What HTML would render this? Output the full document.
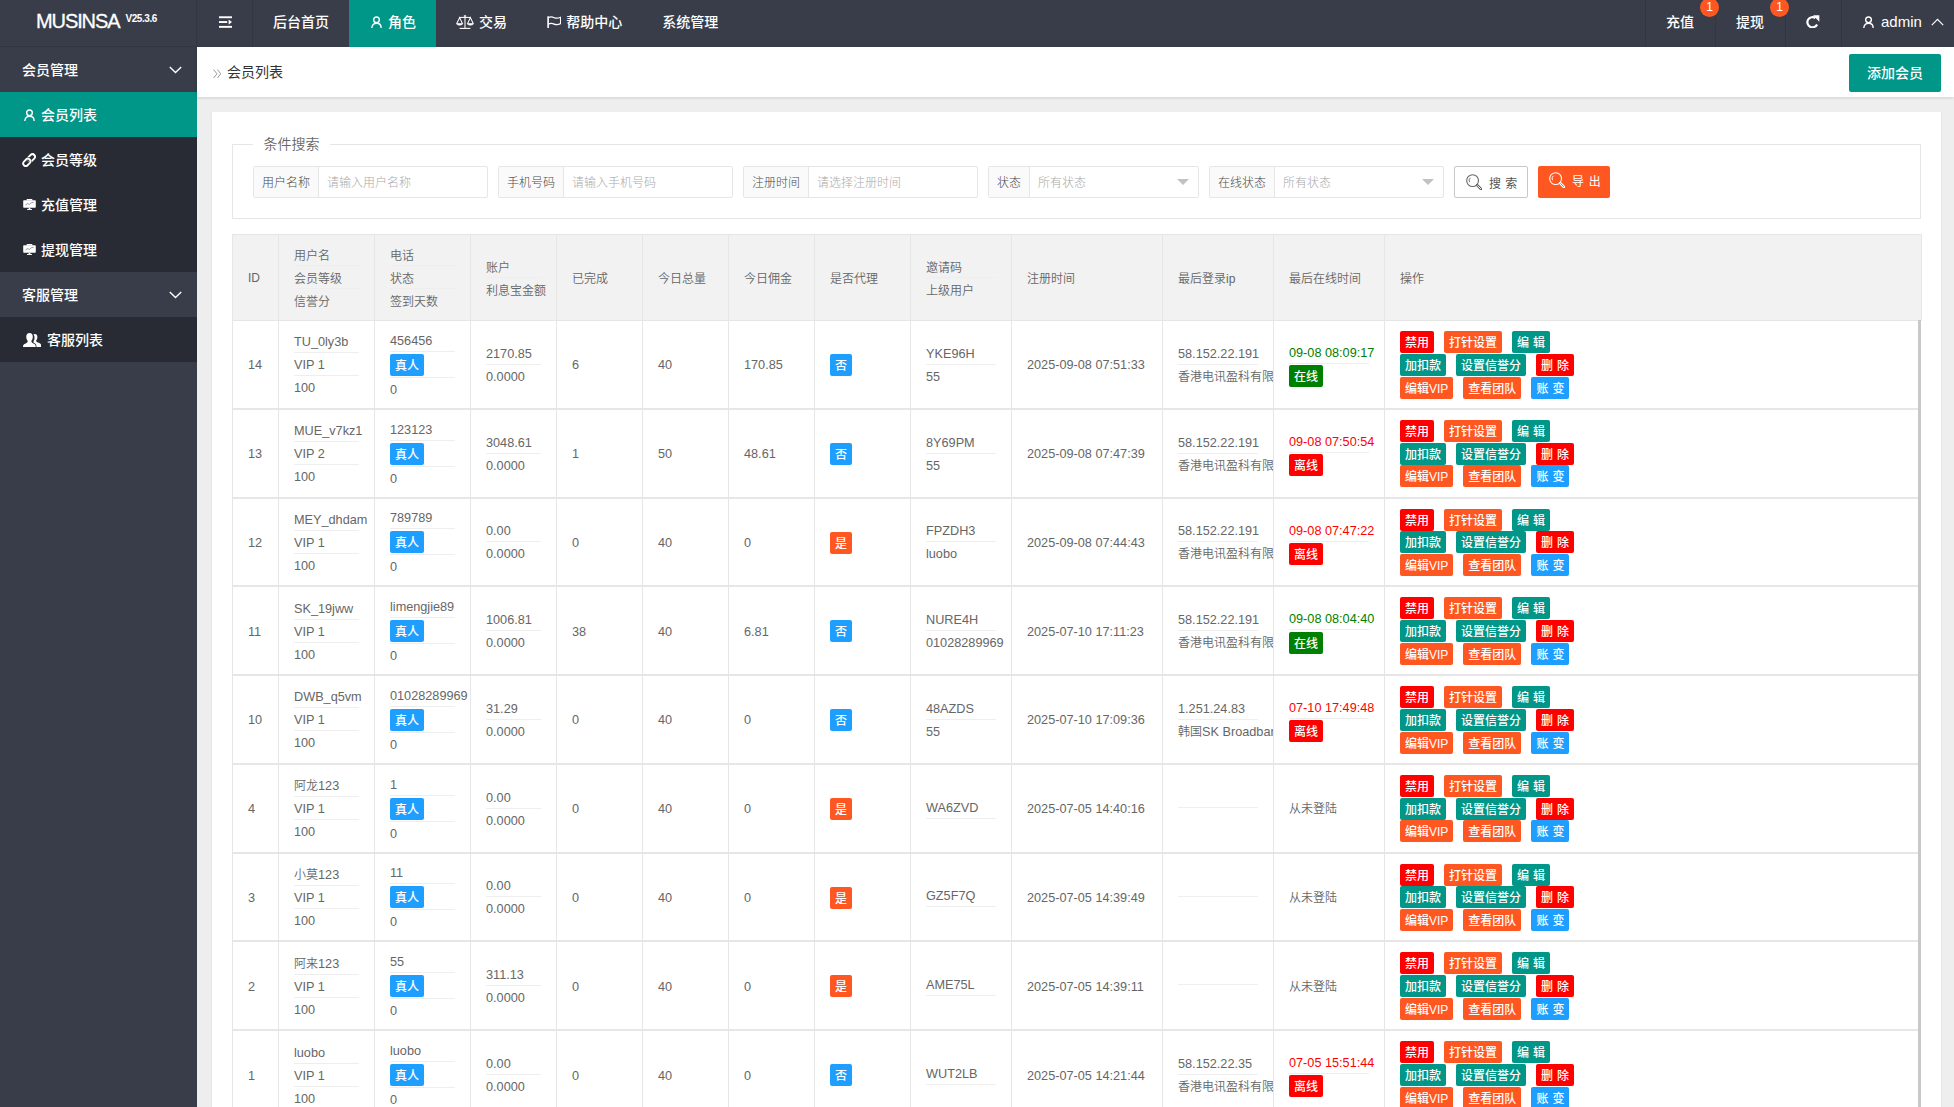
<!DOCTYPE html>
<html lang="zh-CN">
<head>
<meta charset="utf-8">
<title>会员列表</title>
<style>
*{box-sizing:border-box}
html,body{margin:0;padding:0}
html{width:1954px;height:1107px;overflow:hidden}
body{width:1954px;height:1107px;overflow:hidden;background:#eee;position:relative;
 font-family:"Liberation Sans","Noto Sans CJK SC",sans-serif;font-size:14px;color:#333;-webkit-font-smoothing:antialiased}
a{text-decoration:none;color:inherit}
svg{display:block}
.abs{position:absolute}
/* header */
#hd{position:absolute;left:0;top:0;width:1954px;height:47px;background:#393d49;color:#fff}
#logo{position:absolute;left:0;top:0;width:197px;height:47px;border-right:1px solid #33363f;border-bottom:1px solid #33363f}
#logo .n{position:absolute;left:36px;top:9px;font-size:20px;line-height:24px;letter-spacing:-1.1px;-webkit-text-stroke:.3px #fff;white-space:nowrap}
#logo .v{position:absolute;left:125.5px;top:10.5px;font-size:10px;line-height:16px;font-weight:bold;letter-spacing:-.45px;white-space:nowrap}
.ht{position:absolute;top:0;height:47px;line-height:44px;font-size:14px;font-weight:500;white-space:nowrap;color:#fff}
.ht.act{background:#009688}
.vl{position:absolute;top:0;width:1px;height:47px;background:#33363f}
.dot{position:absolute;top:-2px;width:19px;height:19px;border-radius:50%;background:#ff5722;color:#fff;font-size:12px;line-height:19px;text-align:center}
/* side */
#sd{position:absolute;left:0;top:47px;width:197px;height:1060px;background:#393d49;color:#fff}
.si{position:absolute;left:0;width:197px;height:45px;line-height:46px;font-size:14px;font-weight:500;white-space:nowrap}
.si.ch{background:#282b33}
.si.act{background:#009688}
.si .t{position:absolute;top:0}
/* crumb */
#cr{position:absolute;left:197px;top:47px;width:1757px;height:50px;background:#fff;box-shadow:0 1px 3px rgba(0,0,0,.12)}
#cr .t{position:absolute;left:30px;top:0;line-height:51px;font-size:14px;color:#333}
#add{font-weight:500;position:absolute;left:1849px;top:54px;width:92px;height:38px;border-radius:2px;background:#009688;color:#fff;font-size:14px;line-height:39px;text-align:center}
/* panel */
#pn{position:absolute;left:212px;top:112px;width:1729px;height:995px;background:#fff;box-shadow:0 1px 2px rgba(0,0,0,.08)}
#fs{position:absolute;left:232px;top:144px;width:1689px;height:75px;border:1px solid #e6e6e6}
#lg{font-weight:350;position:absolute;left:253px;top:134px;width:77px;height:22px;background:#fff;line-height:21px;text-align:center;font-size:14px;color:#666}
.g{position:absolute;top:166px;height:32px;border:1px solid #e6e6e6;border-radius:2px;background:#fff;font-size:12px}
.g .lb{position:absolute;left:0;top:0;height:30px;line-height:32px;font-weight:300;overflow:hidden;padding:0 8px;background:#fafafa;border-right:1px solid #e6e6e6;color:#4a4a4a;white-space:nowrap}
.g .ph{position:absolute;top:0;height:30px;line-height:33px;font-weight:300;overflow:hidden;color:#aaa;white-space:nowrap}
.g .tri{position:absolute;top:12px;width:0;height:0;border:6px solid transparent;border-top-color:#c2c2c2;border-bottom-width:0}
.btn{position:absolute;top:166px;height:32px;border-radius:2px;font-size:12px;line-height:31px;white-space:nowrap;overflow:hidden}
/* table */
#th{font-weight:350;position:absolute;left:232px;top:234px;width:1690px;height:87px;background:#f2f2f2;border:1px solid #e6e6e6;font-size:12px;color:#666}
#th .td{border-right:1px solid #e6e6e6}
#th .td:last-child{border-right:0}
#tb{font-weight:350;position:absolute;left:232px;top:321px;width:1686px;height:786px;border-left:1px solid #e6e6e6;overflow:hidden;font-size:12px;color:#666;background:#fff}
#sb{position:absolute;left:1918px;top:320px;width:3px;height:787px;background:#c8c8c8}
.tr{position:absolute;left:0;width:1685px;border-bottom:2px solid #e6e6e6}
.td{position:absolute;top:0;bottom:0;padding:0 15px;border-right:1px solid #e6e6e6;display:flex;align-items:center;overflow:hidden;white-space:nowrap}
.td:last-child{border-right:0}
.ci{line-height:23px}
.l{font-size:12.7px}
.stk{display:block}
.it{height:23px;line-height:24px;border-bottom:1px solid #eee;overflow:visible}
.it.last{border-bottom:0;line-height:25px}
.it.bd{height:26px;padding-top:2.5px;line-height:22px}
.it.b2{height:24px;padding-top:1px;line-height:22px}
.ci>.bdg{margin-top:1px}
.ci.s{padding-top:2px}
#th .it{line-height:26px}
#th .it.last{line-height:27px}
#th .ci.s{padding-top:3px}
.it.e{height:1px}
.it.last.e{height:0}
.bdg{font-weight:500;display:inline-block;height:22px;line-height:25px;overflow:hidden;padding:0 5px;border-radius:2px;color:#fff;font-size:12px;vertical-align:top}
.blue{background:#1e9fff}.orange{background:#ff5722}.teal{background:#009688}.bred{background:#ff0000}.bgreen{background:#008000}
.ops{display:block}
.ol{height:23px;padding-top:1px;display:flex}
.b{font-weight:500;display:block;height:22px;line-height:25px;overflow:hidden;word-spacing:.7px;padding:0 5px;margin-right:10px;border-radius:2px;color:#fff;font-size:12px;white-space:pre}
.b .l{font-size:12px}
</style>
</head>
<body>
<div id="hd"><div id="logo"><span class="n">MUSINSA</span><span class="v">V25.3.6</span></div><svg class="abs" style="left:218.9px;top:15.8px" width="13" height="12" viewBox="0 0 13 12"><rect x="0" y="0.3" width="13" height="1.9" fill="#fff"/><rect x="0" y="5.1" width="8.2" height="1.9" fill="#fff"/><rect x="0" y="9.9" width="13" height="1.9" fill="#fff"/><path d="M9.6 3.4 L13 6.05 L9.6 8.7 Z" fill="#fff"/></svg><div class="vl" style="left:252px"></div><div class="ht" style="left:273px">后台首页</div><div class="ht act" style="left:349px;width:87px"></div><svg class="abs" style="left:370.6px;top:15.6px" width="11" height="12.4" viewBox="0 0 12 13"><circle cx="6" cy="3.9" r="3.1" fill="none" stroke="#fff" stroke-width="1.5"/><path d="M0.9 13 C0.9 9.4 3.2 7.6 6 7.6 C8.8 7.6 11.1 9.4 11.1 13" fill="none" stroke="#fff" stroke-width="1.5"/></svg><div class="ht" style="left:388px">角色</div><svg class="abs" style="left:455.5px;top:15.1px" width="18" height="14" viewBox="0 0 18 14"><g fill="none" stroke="#fff" stroke-width="1.05"><path d="M9 1.8 V13"/><path d="M3.6 13.4 H14.4" stroke-width="1.1"/><path d="M3.2 2.4 H14.8"/><path d="M0.8 8.5 L3.6 2.6 L6.4 8.5"/><path d="M11.6 8.5 L14.4 2.6 L17.2 8.5"/><path d="M0.4 8.5 H6.8 C6.5 10.7 0.7 10.7 0.4 8.5 Z" fill="#fff" stroke-width="0.6"/><path d="M11.2 8.5 H17.6 C17.3 10.7 11.5 10.7 11.2 8.5 Z" fill="#fff" stroke-width="0.6"/><circle cx="9" cy="1" r="0.85" stroke-width="0.9"/></g></svg><div class="ht" style="left:479px">交易</div><svg class="abs" style="left:546.9px;top:15.8px" width="14.5" height="12.4" viewBox="0 0 14.5 12.4"><g fill="none" stroke="#fff"><path d="M1.1 0.2 V12" stroke-width="1.6"/><path d="M1.4 1.7 C3.6 0.5 5.4 0.9 7.2 1.7 C9.2 2.6 11 2.4 13.6 1.2 V7.6 C11 8.8 9.2 9 7.2 8.1 C5.4 7.3 3.6 6.9 1.4 8.1" stroke-width="1.25" stroke-linejoin="round"/></g></svg><div class="ht" style="left:566.3px">帮助中心</div><div class="ht" style="left:662.2px">系统管理</div><div class="vl" style="left:1645px"></div><div class="vl" style="left:1715px"></div><div class="vl" style="left:1785px"></div><div class="vl" style="left:1841px"></div><div class="ht" style="left:1666px">充值</div><div class="dot" style="left:1700px">1</div><div class="ht" style="left:1736px">提现</div><div class="dot" style="left:1770px">1</div><svg class="abs" style="left:1806.2px;top:15.3px" width="13.5" height="13" viewBox="0 0 13.5 13"><path d="M11.1 9.4 A5.1 5.1 0 1 1 9.4 3.0" fill="none" stroke="#fff" stroke-width="2.2"/><path d="M7.0 0.2 L13.3 0.2 L13.3 6.7 Z" fill="#fff"/></svg><svg class="abs" style="left:1863.2px;top:15.6px" width="11" height="12.4" viewBox="0 0 12 13"><circle cx="6" cy="3.9" r="3.1" fill="none" stroke="#fff" stroke-width="1.5"/><path d="M0.9 13 C0.9 9.4 3.2 7.6 6 7.6 C8.8 7.6 11.1 9.4 11.1 13" fill="none" stroke="#fff" stroke-width="1.5"/></svg><div class="ht" style="left:1881px;font-size:15px">admin</div><svg class="abs" style="left:1930.8px;top:18px" width="13" height="8" viewBox="0 0 13 8"><path d="M0.8 7.1 L6.5 1.4 L12.2 7.1" fill="none" stroke="#fff" stroke-width="1.2"/></svg></div>
<div id="sd"><div class="si" style="top:0"><span class="t" style="left:22px">会员管理</span></div><svg class="abs" style="left:168.6px;top:19.2px" width="13" height="8" viewBox="0 0 13 8"><path d="M0.8 0.9 L6.5 6.6 L12.2 0.9" fill="none" stroke="#fff" stroke-width="1.4"/></svg><div class="si ch act" style="top:45px"><span class="t" style="left:41px">会员列表</span></div><svg class="abs" style="left:23.6px;top:61.6px" width="11" height="12.4" viewBox="0 0 12 13"><circle cx="6" cy="3.9" r="3.1" fill="none" stroke="#fff" stroke-width="1.5"/><path d="M0.9 13 C0.9 9.4 3.2 7.6 6 7.6 C8.8 7.6 11.1 9.4 11.1 13" fill="none" stroke="#fff" stroke-width="1.5"/></svg><div class="si ch" style="top:90px"><span class="t" style="left:41px">会员等级</span></div><svg class="abs" style="left:22.1px;top:105.5px" width="14.2" height="14.2" viewBox="0 0 14.4 14.4"><g fill="none" stroke-linecap="round"><rect x="-4.1" y="-2.6" width="8.2" height="5.2" rx="2.6" transform="translate(9.5 4.9) rotate(-45)" stroke="#fff" stroke-width="1.9"/><path d="M-4.1 0 V0 A2.6 2.6 0 0 1 -1.5 -2.6 H1.5 A2.6 2.6 0 0 1 4.1 0 A2.6 2.6 0 0 1 1.5 2.6 H-1.5 A2.6 2.6 0 0 1 -4.1 0" transform="translate(4.9 9.5) rotate(-45)" stroke="#282b33" stroke-width="3.6"/><rect x="-4.1" y="-2.6" width="8.2" height="5.2" rx="2.6" transform="translate(4.9 9.5) rotate(-45)" stroke="#fff" stroke-width="1.9"/><path d="M-1.2 2.6 H1.5 A2.6 2.6 0 0 0 4.1 0" transform="translate(9.5 4.9) rotate(-45)" stroke="#282b33" stroke-width="3.4" stroke-linecap="butt"/><path d="M-1.8 2.6 H1.5 A2.6 2.6 0 0 0 4.1 0 A2.6 2.6 0 0 0 3.6 -1.5" transform="translate(9.5 4.9) rotate(-45)" stroke="#fff" stroke-width="1.9" stroke-linecap="butt"/></g></svg><div class="si ch" style="top:135px"><span class="t" style="left:41px">充值管理</span></div><svg class="abs" style="left:22.8px;top:152px" width="13" height="11.4" viewBox="0 0 13 11.4"><rect x="0.2" y="1.2" width="12.6" height="7.6" rx="0.8" fill="#fff"/><rect x="3.6" y="0" width="5.8" height="1.6" rx="0.6" fill="#fff"/><path d="M2.4 6 L4.6 4.6 L6.4 5.4 L8.2 3.8 L10.6 3.2" fill="none" stroke="#555a66" stroke-width="0.6"/><rect x="5.6" y="8.8" width="1.8" height="1.6" fill="#fff"/><rect x="4" y="10.1" width="5" height="1.1" fill="#fff"/></svg><div class="si ch" style="top:180px"><span class="t" style="left:41px">提现管理</span></div><svg class="abs" style="left:22.8px;top:197px" width="13" height="11.4" viewBox="0 0 13 11.4"><rect x="0.2" y="1.2" width="12.6" height="7.6" rx="0.8" fill="#fff"/><rect x="3.6" y="0" width="5.8" height="1.6" rx="0.6" fill="#fff"/><path d="M2.4 6 L4.6 4.6 L6.4 5.4 L8.2 3.8 L10.6 3.2" fill="none" stroke="#555a66" stroke-width="0.6"/><rect x="5.6" y="8.8" width="1.8" height="1.6" fill="#fff"/><rect x="4" y="10.1" width="5" height="1.1" fill="#fff"/></svg><div class="si" style="top:225px"><span class="t" style="left:22px">客服管理</span></div><svg class="abs" style="left:168.6px;top:244.2px" width="13" height="8" viewBox="0 0 13 8"><path d="M0.8 0.9 L6.5 6.6 L12.2 0.9" fill="none" stroke="#fff" stroke-width="1.4"/></svg><div class="si ch" style="top:270px"><span class="t" style="left:47px">客服列表</span></div><svg class="abs" style="left:22.8px;top:286px" width="18.4" height="14" viewBox="0 0 18 13.7"><g fill="#fff"><path d="M11.6 1 C13.2 1 14.2 2.3 14.1 4.1 C14 5.6 13.4 6.6 12.9 7.2 C12.8 8.3 13.4 8.9 14.6 9.4 C16.4 10.1 18 10.6 18 12.6 V13.6 H13.2 C13.2 11.6 12.6 10.4 10.6 9.6 C10.2 9.4 10.3 8.6 10.4 8.1 C10.9 7.3 11.2 6.3 11.3 5.2 C11.4 3.6 10.9 2.2 10.2 1.5 C10.6 1.2 11.1 1 11.6 1 Z"/><path d="M6.4 0 C8.4 0 9.7 1.6 9.6 3.9 C9.5 5.8 8.8 7 8.2 7.7 C8.1 9 8.8 9.7 10.2 10.3 C12 11 12.4 11.6 12.4 13.6 H0 C0 11.6 0.8 11 2.6 10.3 C4 9.7 4.7 9 4.6 7.7 C4 7 3.3 5.8 3.2 3.9 C3.1 1.6 4.4 0 6.4 0 Z"/></g></svg></div>
<div id="cr"><svg class="abs" style="left:15.6px;top:21.6px" width="8.6" height="9.6" viewBox="0 0 8.6 9.6"><g fill="none" stroke="#999" stroke-width="1"><path d="M0.6 0.6 L4 4.8 L0.6 9"/><path d="M4.4 0.6 L7.8 4.8 L4.4 9"/></g></svg><span class="t">会员列表</span></div><a id="add">添加会员</a>
<div id="pn"></div>
<div id="fs"></div><div id="lg">条件搜索</div><div class="g" style="left:253px;width:235px"><span class="lb" style="width:65px">用户名称</span><span class="ph" style="left:73px">请输入用户名称</span></div><div class="g" style="left:498px;width:235px"><span class="lb" style="width:65px">手机号码</span><span class="ph" style="left:73px">请输入手机号码</span></div><div class="g" style="left:743px;width:235px"><span class="lb" style="width:65px">注册时间</span><span class="ph" style="left:73px">请选择注册时间</span></div><div class="g" style="left:988px;width:211px"><span class="lb" style="width:41px">状态</span><span class="ph" style="left:49px">所有状态</span><i class="tri" style="left:188px"></i></div><div class="g" style="left:1209px;width:235px"><span class="lb" style="width:65px">在线状态</span><span class="ph" style="left:73px">所有状态</span><i class="tri" style="left:212px"></i></div><a class="btn" style="left:1454px;width:74px;border:1px solid #c9c9c9;background:#fff;color:#555"><svg class="abs" style="left:10.6px;top:7px" width="16.4" height="16.4" viewBox="0 0 16.4 16.4"><g fill="none" stroke="#666"><circle cx="6.6" cy="6.6" r="5.9" stroke-width="1.1"/><path d="M3.6 8.2 A3.4 3.4 0 0 1 4.4 3.8" stroke-width="0.9"/><path d="M11.2 11.2 L15 15" stroke-width="2.6" stroke-linecap="round"/></g><path d="M11.6 11.6 L14.7 14.7" stroke="#fff" stroke-width="0.9" stroke-linecap="round"/></svg><span class="abs" style="left:34px;top:2px;word-spacing:1px">搜 索</span></a><a class="btn" style="left:1538px;width:72px;background:#ff5722;color:#fff"><svg class="abs" style="left:10.8px;top:6px" width="16.4" height="16.4" viewBox="0 0 16.4 16.4"><g fill="none" stroke="#fff"><circle cx="6.6" cy="6.6" r="5.9" stroke-width="1.1"/><path d="M3.6 8.2 A3.4 3.4 0 0 1 4.4 3.8" stroke-width="0.9"/><path d="M11.2 11.2 L15 15" stroke-width="2.6" stroke-linecap="round"/></g><path d="M11.6 11.6 L14.7 14.7" stroke="#ff5722" stroke-width="0.9" stroke-linecap="round"/></svg><span class="abs" style="left:34px;top:1px;word-spacing:1.5px">导 出</span></a>
<div id="th"><div class="td" style="left:0px;width:46px"><div class="ci s"><span style="position:relative;top:-1px">ID</span></div></div><div class="td" style="left:46px;width:96px"><div class="ci"><div class="stk" style="width:65px"><div class="it">用户名</div><div class="it">会员等级</div><div class="it last">信誉分</div></div></div></div><div class="td" style="left:142px;width:96px"><div class="ci"><div class="stk" style="width:65px"><div class="it">电话</div><div class="it">状态</div><div class="it last">签到天数</div></div></div></div><div class="td" style="left:238px;width:86px"><div class="ci"><div class="stk" style="width:55px"><div class="it">账户</div><div class="it last">利息宝金额</div></div></div></div><div class="td" style="left:324px;width:86px"><div class="ci s">已完成</div></div><div class="td" style="left:410px;width:86px"><div class="ci s">今日总量</div></div><div class="td" style="left:496px;width:86px"><div class="ci s">今日佣金</div></div><div class="td" style="left:582px;width:96px"><div class="ci s">是否代理</div></div><div class="td" style="left:678px;width:101px"><div class="ci"><div class="stk" style="width:70px"><div class="it">邀请码</div><div class="it last">上级用户</div></div></div></div><div class="td" style="left:779px;width:151px"><div class="ci s">注册时间</div></div><div class="td" style="left:930px;width:111px"><div class="ci s">最后登录ip</div></div><div class="td" style="left:1041px;width:111px"><div class="ci s">最后在线时间</div></div><div class="td" style="left:1152px;width:536px"><div class="ci s">操作</div></div></div>
<div id="tb">
<div class="tr" style="top:0px;height:89px"><div class="td" style="left:0px;width:46px;"><div class="ci s"><span class="l">14</span></div></div><div class="td" style="left:46px;width:96px;"><div class="ci"><div class="stk" style="width:65px"><div class="it"><span class="l">TU_0ly3b</span></div><div class="it"><span class="l">VIP 1</span></div><div class="it last"><span class="l">100</span></div></div></div></div><div class="td" style="left:142px;width:96px;"><div class="ci"><div class="stk" style="width:65px"><div class="it"><span class="l">456456</span></div><div class="it bd"><span class="bdg blue">真人</span></div><div class="it last"><span class="l">0</span></div></div></div></div><div class="td" style="left:238px;width:86px;"><div class="ci"><div class="stk" style="width:55px"><div class="it"><span class="l">2170.85</span></div><div class="it last"><span class="l">0.0000</span></div></div></div></div><div class="td" style="left:324px;width:86px;"><div class="ci s"><span class="l">6</span></div></div><div class="td" style="left:410px;width:86px;"><div class="ci s"><span class="l">40</span></div></div><div class="td" style="left:496px;width:86px;"><div class="ci s"><span class="l">170.85</span></div></div><div class="td" style="left:582px;width:96px;"><div class="ci"><span class="bdg blue">否</span></div></div><div class="td" style="left:678px;width:101px;"><div class="ci"><div class="stk" style="width:70px"><div class="it"><span class="l">YKE96H</span></div><div class="it last"><span class="l">55</span></div></div></div></div><div class="td" style="left:779px;width:151px;"><div class="ci s"><span class="l">2025-09-08 07:51:33</span></div></div><div class="td" style="left:930px;width:111px;"><div class="ci"><div class="stk" style="width:80px"><div class="it"><span class="l">58.152.22.191</span></div><div class="it last">香港电讯盈科有限公司</div></div></div></div><div class="td" style="left:1041px;width:111px;"><div class="ci"><div class="stk" style="width:80px"><div class="it" style="color:green"><span class="l">09-08 08:09:17</span></div><div class="it b2 last"><span class="bdg bgreen">在线</span></div></div></div></div><div class="td" style="left:1152px;width:537px;"><div class="ci"><div class="ops"><div class="ol"><a class="b bred">禁用</a><a class="b orange">打针设置</a><a class="b teal">编 辑</a></div><div class="ol"><a class="b teal">加扣款</a><a class="b teal">设置信誉分</a><a class="b bred">删 除</a></div><div class="ol"><a class="b orange">编辑<span class="l">VIP</span></a><a class="b orange">查看团队</a><a class="b blue">账 变</a></div></div></div></div></div>
<div class="tr" style="top:89px;height:89px"><div class="td" style="left:0px;width:46px;"><div class="ci s"><span class="l">13</span></div></div><div class="td" style="left:46px;width:96px;"><div class="ci"><div class="stk" style="width:65px"><div class="it"><span class="l">MUE_v7kz1</span></div><div class="it"><span class="l">VIP 2</span></div><div class="it last"><span class="l">100</span></div></div></div></div><div class="td" style="left:142px;width:96px;"><div class="ci"><div class="stk" style="width:65px"><div class="it"><span class="l">123123</span></div><div class="it bd"><span class="bdg blue">真人</span></div><div class="it last"><span class="l">0</span></div></div></div></div><div class="td" style="left:238px;width:86px;"><div class="ci"><div class="stk" style="width:55px"><div class="it"><span class="l">3048.61</span></div><div class="it last"><span class="l">0.0000</span></div></div></div></div><div class="td" style="left:324px;width:86px;"><div class="ci s"><span class="l">1</span></div></div><div class="td" style="left:410px;width:86px;"><div class="ci s"><span class="l">50</span></div></div><div class="td" style="left:496px;width:86px;"><div class="ci s"><span class="l">48.61</span></div></div><div class="td" style="left:582px;width:96px;"><div class="ci"><span class="bdg blue">否</span></div></div><div class="td" style="left:678px;width:101px;"><div class="ci"><div class="stk" style="width:70px"><div class="it"><span class="l">8Y69PM</span></div><div class="it last"><span class="l">55</span></div></div></div></div><div class="td" style="left:779px;width:151px;"><div class="ci s"><span class="l">2025-09-08 07:47:39</span></div></div><div class="td" style="left:930px;width:111px;"><div class="ci"><div class="stk" style="width:80px"><div class="it"><span class="l">58.152.22.191</span></div><div class="it last">香港电讯盈科有限公司</div></div></div></div><div class="td" style="left:1041px;width:111px;"><div class="ci"><div class="stk" style="width:80px"><div class="it" style="color:red"><span class="l">09-08 07:50:54</span></div><div class="it b2 last"><span class="bdg bred">离线</span></div></div></div></div><div class="td" style="left:1152px;width:537px;"><div class="ci"><div class="ops"><div class="ol"><a class="b bred">禁用</a><a class="b orange">打针设置</a><a class="b teal">编 辑</a></div><div class="ol" style="height:22px"><a class="b teal">加扣款</a><a class="b teal">设置信誉分</a><a class="b bred">删 除</a></div><div class="ol" style="height:24px"><a class="b orange">编辑<span class="l">VIP</span></a><a class="b orange">查看团队</a><a class="b blue">账 变</a></div></div></div></div></div>
<div class="tr" style="top:178px;height:88px"><div class="td" style="left:0px;width:46px;"><div class="ci s"><span class="l">12</span></div></div><div class="td" style="left:46px;width:96px;"><div class="ci"><div class="stk" style="width:65px"><div class="it"><span class="l">MEY_dhdam</span></div><div class="it"><span class="l">VIP 1</span></div><div class="it last"><span class="l">100</span></div></div></div></div><div class="td" style="left:142px;width:96px;"><div class="ci"><div class="stk" style="width:65px"><div class="it"><span class="l">789789</span></div><div class="it bd" style="padding-top:1.5px"><span class="bdg blue">真人</span></div><div class="it last"><span class="l">0</span></div></div></div></div><div class="td" style="left:238px;width:86px;"><div class="ci"><div class="stk" style="width:55px"><div class="it"><span class="l">0.00</span></div><div class="it last"><span class="l">0.0000</span></div></div></div></div><div class="td" style="left:324px;width:86px;"><div class="ci s"><span class="l">0</span></div></div><div class="td" style="left:410px;width:86px;"><div class="ci s"><span class="l">40</span></div></div><div class="td" style="left:496px;width:86px;"><div class="ci s"><span class="l">0</span></div></div><div class="td" style="left:582px;width:96px;"><div class="ci"><span class="bdg orange">是</span></div></div><div class="td" style="left:678px;width:101px;"><div class="ci"><div class="stk" style="width:70px"><div class="it"><span class="l">FPZDH3</span></div><div class="it last"><span class="l">luobo</span></div></div></div></div><div class="td" style="left:779px;width:151px;"><div class="ci s"><span class="l">2025-09-08 07:44:43</span></div></div><div class="td" style="left:930px;width:111px;"><div class="ci"><div class="stk" style="width:80px"><div class="it"><span class="l">58.152.22.191</span></div><div class="it last">香港电讯盈科有限公司</div></div></div></div><div class="td" style="left:1041px;width:111px;"><div class="ci"><div class="stk" style="width:80px"><div class="it" style="color:red"><span class="l">09-08 07:47:22</span></div><div class="it b2 last"><span class="bdg bred">离线</span></div></div></div></div><div class="td" style="left:1152px;width:537px;"><div class="ci"><div class="ops"><div class="ol" style="height:22px"><a class="b bred">禁用</a><a class="b orange">打针设置</a><a class="b teal">编 辑</a></div><div class="ol"><a class="b teal">加扣款</a><a class="b teal">设置信誉分</a><a class="b bred">删 除</a></div><div class="ol"><a class="b orange">编辑<span class="l">VIP</span></a><a class="b orange">查看团队</a><a class="b blue">账 变</a></div></div></div></div></div>
<div class="tr" style="top:266px;height:89px"><div class="td" style="left:0px;width:46px;"><div class="ci s"><div style="padding-top:2px"><span class="l">11</span></div></div></div><div class="td" style="left:46px;width:96px;"><div class="ci"><div style="padding-top:2px"><div class="stk" style="width:65px"><div class="it"><span class="l">SK_19jww</span></div><div class="it"><span class="l">VIP 1</span></div><div class="it last"><span class="l">100</span></div></div></div></div></div><div class="td" style="left:142px;width:96px;"><div class="ci"><div class="stk" style="width:65px"><div class="it"><span class="l">limengjie89</span></div><div class="it bd"><span class="bdg blue">真人</span></div><div class="it last"><span class="l">0</span></div></div></div></div><div class="td" style="left:238px;width:86px;"><div class="ci"><div class="stk" style="width:55px"><div class="it"><span class="l">1006.81</span></div><div class="it last"><span class="l">0.0000</span></div></div></div></div><div class="td" style="left:324px;width:86px;"><div class="ci s"><div style="padding-top:2px"><span class="l">38</span></div></div></div><div class="td" style="left:410px;width:86px;"><div class="ci s"><div style="padding-top:2px"><span class="l">40</span></div></div></div><div class="td" style="left:496px;width:86px;"><div class="ci s"><div style="padding-top:2px"><span class="l">6.81</span></div></div></div><div class="td" style="left:582px;width:96px;"><div class="ci"><span class="bdg blue">否</span></div></div><div class="td" style="left:678px;width:101px;"><div class="ci"><div class="stk" style="width:70px"><div class="it"><span class="l">NURE4H</span></div><div class="it last"><span class="l">01028289969</span></div></div></div></div><div class="td" style="left:779px;width:151px;"><div class="ci s"><div style="padding-top:2px"><span class="l">2025-07-10 17:11:23</span></div></div></div><div class="td" style="left:930px;width:111px;"><div class="ci"><div class="stk" style="width:80px"><div class="it"><span class="l">58.152.22.191</span></div><div class="it last">香港电讯盈科有限公司</div></div></div></div><div class="td" style="left:1041px;width:111px;"><div class="ci"><div class="stk" style="width:80px"><div class="it" style="color:green"><span class="l">09-08 08:04:40</span></div><div class="it b2 last" style="padding-top:2px"><span class="bdg bgreen">在线</span></div></div></div></div><div class="td" style="left:1152px;width:537px;"><div class="ci"><div class="ops"><div class="ol"><a class="b bred">禁用</a><a class="b orange">打针设置</a><a class="b teal">编 辑</a></div><div class="ol"><a class="b teal">加扣款</a><a class="b teal">设置信誉分</a><a class="b bred">删 除</a></div><div class="ol"><a class="b orange">编辑<span class="l">VIP</span></a><a class="b orange">查看团队</a><a class="b blue">账 变</a></div></div></div></div></div>
<div class="tr" style="top:355px;height:89px"><div class="td" style="left:0px;width:46px;"><div class="ci s"><span class="l">10</span></div></div><div class="td" style="left:46px;width:96px;"><div class="ci"><div class="stk" style="width:65px"><div class="it"><span class="l">DWB_q5vm</span></div><div class="it"><span class="l">VIP 1</span></div><div class="it last"><span class="l">100</span></div></div></div></div><div class="td" style="left:142px;width:96px;"><div class="ci"><div class="stk" style="width:65px"><div class="it"><span class="l">01028289969</span></div><div class="it bd"><span class="bdg blue">真人</span></div><div class="it last"><span class="l">0</span></div></div></div></div><div class="td" style="left:238px;width:86px;"><div class="ci"><div class="stk" style="width:55px"><div class="it"><span class="l">31.29</span></div><div class="it last"><span class="l">0.0000</span></div></div></div></div><div class="td" style="left:324px;width:86px;"><div class="ci s"><span class="l">0</span></div></div><div class="td" style="left:410px;width:86px;"><div class="ci s"><span class="l">40</span></div></div><div class="td" style="left:496px;width:86px;"><div class="ci s"><span class="l">0</span></div></div><div class="td" style="left:582px;width:96px;"><div class="ci"><span class="bdg blue">否</span></div></div><div class="td" style="left:678px;width:101px;"><div class="ci"><div class="stk" style="width:70px"><div class="it"><span class="l">48AZDS</span></div><div class="it last"><span class="l">55</span></div></div></div></div><div class="td" style="left:779px;width:151px;"><div class="ci s"><span class="l">2025-07-10 17:09:36</span></div></div><div class="td" style="left:930px;width:111px;"><div class="ci"><div class="stk" style="width:80px"><div class="it"><span class="l">1.251.24.83</span></div><div class="it last">韩国<span class="l">SK Broadband</span></div></div></div></div><div class="td" style="left:1041px;width:111px;"><div class="ci"><div class="stk" style="width:80px"><div class="it" style="color:red"><span class="l">07-10 17:49:48</span></div><div class="it b2 last"><span class="bdg bred">离线</span></div></div></div></div><div class="td" style="left:1152px;width:537px;"><div class="ci"><div class="ops"><div class="ol"><a class="b bred">禁用</a><a class="b orange">打针设置</a><a class="b teal">编 辑</a></div><div class="ol"><a class="b teal">加扣款</a><a class="b teal">设置信誉分</a><a class="b bred">删 除</a></div><div class="ol"><a class="b orange">编辑<span class="l">VIP</span></a><a class="b orange">查看团队</a><a class="b blue">账 变</a></div></div></div></div></div>
<div class="tr" style="top:444px;height:89px"><div class="td" style="left:0px;width:46px;"><div class="ci s"><span class="l">4</span></div></div><div class="td" style="left:46px;width:96px;"><div class="ci"><div class="stk" style="width:65px"><div class="it">阿龙<span class="l">123</span></div><div class="it"><span class="l">VIP 1</span></div><div class="it last"><span class="l">100</span></div></div></div></div><div class="td" style="left:142px;width:96px;"><div class="ci"><div class="stk" style="width:65px"><div class="it"><span class="l">1</span></div><div class="it bd"><span class="bdg blue">真人</span></div><div class="it last"><span class="l">0</span></div></div></div></div><div class="td" style="left:238px;width:86px;"><div class="ci"><div class="stk" style="width:55px"><div class="it"><span class="l">0.00</span></div><div class="it last"><span class="l">0.0000</span></div></div></div></div><div class="td" style="left:324px;width:86px;"><div class="ci s"><span class="l">0</span></div></div><div class="td" style="left:410px;width:86px;"><div class="ci s"><span class="l">40</span></div></div><div class="td" style="left:496px;width:86px;"><div class="ci s"><span class="l">0</span></div></div><div class="td" style="left:582px;width:96px;"><div class="ci"><span class="bdg orange">是</span></div></div><div class="td" style="left:678px;width:101px;"><div class="ci"><div class="stk" style="width:70px"><div class="it"><span class="l">WA6ZVD</span></div><div class="it last e" style="height:3px"></div></div></div></div><div class="td" style="left:779px;width:151px;"><div class="ci s"><span class="l">2025-07-05 14:40:16</span></div></div><div class="td" style="left:930px;width:111px;"><div class="ci"><div class="stk" style="width:80px"><div class="it e"></div><div class="it last e" style="height:2px"></div></div></div></div><div class="td" style="left:1041px;width:111px;"><div class="ci s">从未登陆</div></div><div class="td" style="left:1152px;width:537px;"><div class="ci"><div class="ops"><div class="ol"><a class="b bred">禁用</a><a class="b orange">打针设置</a><a class="b teal">编 辑</a></div><div class="ol" style="height:22px"><a class="b teal">加扣款</a><a class="b teal">设置信誉分</a><a class="b bred">删 除</a></div><div class="ol" style="height:24px"><a class="b orange">编辑<span class="l">VIP</span></a><a class="b orange">查看团队</a><a class="b blue">账 变</a></div></div></div></div></div>
<div class="tr" style="top:533px;height:88px"><div class="td" style="left:0px;width:46px;"><div class="ci s"><span class="l">3</span></div></div><div class="td" style="left:46px;width:96px;"><div class="ci"><div class="stk" style="width:65px"><div class="it">小莫<span class="l">123</span></div><div class="it"><span class="l">VIP 1</span></div><div class="it last"><span class="l">100</span></div></div></div></div><div class="td" style="left:142px;width:96px;"><div class="ci"><div class="stk" style="width:65px"><div class="it"><span class="l">11</span></div><div class="it bd" style="padding-top:1.5px"><span class="bdg blue">真人</span></div><div class="it last"><span class="l">0</span></div></div></div></div><div class="td" style="left:238px;width:86px;"><div class="ci"><div class="stk" style="width:55px"><div class="it"><span class="l">0.00</span></div><div class="it last"><span class="l">0.0000</span></div></div></div></div><div class="td" style="left:324px;width:86px;"><div class="ci s"><span class="l">0</span></div></div><div class="td" style="left:410px;width:86px;"><div class="ci s"><span class="l">40</span></div></div><div class="td" style="left:496px;width:86px;"><div class="ci s"><span class="l">0</span></div></div><div class="td" style="left:582px;width:96px;"><div class="ci"><span class="bdg orange">是</span></div></div><div class="td" style="left:678px;width:101px;"><div class="ci"><div class="stk" style="width:70px"><div class="it"><span class="l">GZ5F7Q</span></div><div class="it last e" style="height:3px"></div></div></div></div><div class="td" style="left:779px;width:151px;"><div class="ci s"><span class="l">2025-07-05 14:39:49</span></div></div><div class="td" style="left:930px;width:111px;"><div class="ci"><div class="stk" style="width:80px"><div class="it e"></div><div class="it last e" style="height:2px"></div></div></div></div><div class="td" style="left:1041px;width:111px;"><div class="ci s">从未登陆</div></div><div class="td" style="left:1152px;width:537px;"><div class="ci"><div class="ops"><div class="ol" style="height:22px"><a class="b bred">禁用</a><a class="b orange">打针设置</a><a class="b teal">编 辑</a></div><div class="ol"><a class="b teal">加扣款</a><a class="b teal">设置信誉分</a><a class="b bred">删 除</a></div><div class="ol"><a class="b orange">编辑<span class="l">VIP</span></a><a class="b orange">查看团队</a><a class="b blue">账 变</a></div></div></div></div></div>
<div class="tr" style="top:621px;height:89px"><div class="td" style="left:0px;width:46px;"><div class="ci s"><div style="padding-top:2px"><span class="l">2</span></div></div></div><div class="td" style="left:46px;width:96px;"><div class="ci"><div style="padding-top:2px"><div class="stk" style="width:65px"><div class="it">阿来<span class="l">123</span></div><div class="it"><span class="l">VIP 1</span></div><div class="it last"><span class="l">100</span></div></div></div></div></div><div class="td" style="left:142px;width:96px;"><div class="ci"><div class="stk" style="width:65px"><div class="it"><span class="l">55</span></div><div class="it bd"><span class="bdg blue">真人</span></div><div class="it last"><span class="l">0</span></div></div></div></div><div class="td" style="left:238px;width:86px;"><div class="ci"><div class="stk" style="width:55px"><div class="it"><span class="l">311.13</span></div><div class="it last"><span class="l">0.0000</span></div></div></div></div><div class="td" style="left:324px;width:86px;"><div class="ci s"><div style="padding-top:2px"><span class="l">0</span></div></div></div><div class="td" style="left:410px;width:86px;"><div class="ci s"><div style="padding-top:2px"><span class="l">40</span></div></div></div><div class="td" style="left:496px;width:86px;"><div class="ci s"><div style="padding-top:2px"><span class="l">0</span></div></div></div><div class="td" style="left:582px;width:96px;"><div class="ci"><span class="bdg orange">是</span></div></div><div class="td" style="left:678px;width:101px;"><div class="ci"><div class="stk" style="width:70px"><div class="it"><span class="l">AME75L</span></div><div class="it last e" style="height:3px"></div></div></div></div><div class="td" style="left:779px;width:151px;"><div class="ci s"><div style="padding-top:2px"><span class="l">2025-07-05 14:39:11</span></div></div></div><div class="td" style="left:930px;width:111px;"><div class="ci"><div class="stk" style="width:80px"><div class="it e"></div><div class="it last e" style="height:2px"></div></div></div></div><div class="td" style="left:1041px;width:111px;"><div class="ci s"><div style="padding-top:2px">从未登陆</div></div></div><div class="td" style="left:1152px;width:537px;"><div class="ci"><div class="ops"><div class="ol"><a class="b bred">禁用</a><a class="b orange">打针设置</a><a class="b teal">编 辑</a></div><div class="ol"><a class="b teal">加扣款</a><a class="b teal">设置信誉分</a><a class="b bred">删 除</a></div><div class="ol"><a class="b orange">编辑<span class="l">VIP</span></a><a class="b orange">查看团队</a><a class="b blue">账 变</a></div></div></div></div></div>
<div class="tr" style="top:710px;height:89px"><div class="td" style="left:0px;width:46px;"><div class="ci s"><div style="padding-top:2px"><span class="l">1</span></div></div></div><div class="td" style="left:46px;width:96px;"><div class="ci"><div style="padding-top:2px"><div class="stk" style="width:65px"><div class="it"><span class="l">luobo</span></div><div class="it"><span class="l">VIP 1</span></div><div class="it last"><span class="l">100</span></div></div></div></div></div><div class="td" style="left:142px;width:96px;"><div class="ci"><div class="stk" style="width:65px"><div class="it"><span class="l">luobo</span></div><div class="it bd"><span class="bdg blue">真人</span></div><div class="it last"><span class="l">0</span></div></div></div></div><div class="td" style="left:238px;width:86px;"><div class="ci"><div class="stk" style="width:55px"><div class="it"><span class="l">0.00</span></div><div class="it last"><span class="l">0.0000</span></div></div></div></div><div class="td" style="left:324px;width:86px;"><div class="ci s"><div style="padding-top:2px"><span class="l">0</span></div></div></div><div class="td" style="left:410px;width:86px;"><div class="ci s"><div style="padding-top:2px"><span class="l">40</span></div></div></div><div class="td" style="left:496px;width:86px;"><div class="ci s"><div style="padding-top:2px"><span class="l">0</span></div></div></div><div class="td" style="left:582px;width:96px;"><div class="ci"><span class="bdg blue">否</span></div></div><div class="td" style="left:678px;width:101px;"><div class="ci"><div class="stk" style="width:70px"><div class="it"><span class="l">WUT2LB</span></div><div class="it last e" style="height:3px"></div></div></div></div><div class="td" style="left:779px;width:151px;"><div class="ci s"><div style="padding-top:2px"><span class="l">2025-07-05 14:21:44</span></div></div></div><div class="td" style="left:930px;width:111px;"><div class="ci"><div class="stk" style="width:80px"><div class="it"><span class="l">58.152.22.35</span></div><div class="it last">香港电讯盈科有限公司</div></div></div></div><div class="td" style="left:1041px;width:111px;"><div class="ci"><div class="stk" style="width:80px"><div class="it" style="color:red"><span class="l">07-05 15:51:44</span></div><div class="it b2 last"><span class="bdg bred">离线</span></div></div></div></div><div class="td" style="left:1152px;width:537px;"><div class="ci"><div class="ops"><div class="ol"><a class="b bred">禁用</a><a class="b orange">打针设置</a><a class="b teal">编 辑</a></div><div class="ol"><a class="b teal">加扣款</a><a class="b teal">设置信誉分</a><a class="b bred">删 除</a></div><div class="ol"><a class="b orange">编辑<span class="l">VIP</span></a><a class="b orange">查看团队</a><a class="b blue">账 变</a></div></div></div></div></div>

</div>
<div id="sb"></div>
</body>
</html>
